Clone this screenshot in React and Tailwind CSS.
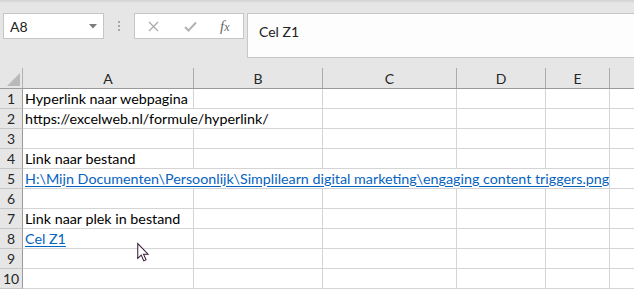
import React from 'react';

const cols = [
  { id: 'A', w: 171 },
  { id: 'B', w: 129 },
  { id: 'C', w: 134 },
  { id: 'D', w: 89 },
  { id: 'E', w: 64 },
  { id: '', w: 40 },
];

// span = number of columns the overflowing text covers
const rows = [
  { n: 1, text: 'Hyperlink naar webpagina', span: 1 },
  { n: 2, text: 'https://excelweb.nl/formule/hyperlink/', span: 2 },
  { n: 3 },
  { n: 4, text: 'Link naar bestand', span: 1 },
  { n: 5, text: 'H:\\Mijn Documenten\\Persoonlijk\\Simplilearn digital marketing\\engaging content triggers.png', span: 5, link: true },
  { n: 6 },
  { n: 7, text: 'Link naar plek in bestand', span: 1 },
  { n: 8, text: 'Cel Z1', span: 1, link: true },
  { n: 9 },
  { n: 10 },
];

const font = { fontFamily: 'Lato, "Open Sans", sans-serif' };

const Cursor = () => (
  <svg className="absolute left-[136px] top-[242px]" width="14" height="21" viewBox="0 0 13 20">
    <path
      d="M1.5 1.5 L1.5 15.5 L4.8 12.4 L7.3 18 L9.4 17 L7 11.6 L11.3 11.6 Z"
      fill="#fff"
      stroke="#3b1d3a"
      strokeWidth="1"
      strokeLinejoin="miter"
    />
  </svg>
);

const Row = ({ row }) => {
  const cells = [];
  let i = 0;
  while (i < cols.length) {
    const span = i === 0 && row.text ? row.span : 1;
    const w = cols.slice(i, i + span).reduce((s, c) => s + c.w, 0);
    cells.push(
      <div
        key={i}
        style={{ width: w }}
        className="h-full shrink-0 border-r border-b border-[#d4d4d4] bg-white flex items-center pl-[2px] overflow-hidden whitespace-nowrap"
      >
        {i === 0 && row.text && (
          <span
            className={
              row.link
                ? 'text-[#0563c1] underline decoration-[#0563c1] underline-offset-2 text-[14.3px]'
                : 'text-black text-[14.3px]'
            }
          >
            {row.text}
          </span>
        )}
      </div>
    );
    i += span;
  }
  return (
    <div className="flex h-[20px]">
      <div className="w-[23px] shrink-0 h-full bg-[#e6e6e6] border-r border-b border-r-[#9b9b9b] border-b-[#c6c6c6] flex items-center justify-center text-[14px] text-[#262626]">
        {row.n}
      </div>
      {cells}
    </div>
  );
};

export default function App() {
  return (
    <div className="relative w-[634px] h-[289px] overflow-hidden bg-[#e6e6e6] select-none" style={font}>
      <div className="h-[3px] bg-gradient-to-b from-[#d2d2d2] to-[#e4e4e4]" />
      {/* formula bar */}
      <div className="flex pt-[10px] h-[55px]">
        <div className="ml-[3px] w-[101px] h-[26px] bg-white border border-[#c6c6c6] flex items-center justify-between pl-[6px] pr-[6px]">
          <span className="text-[14px] text-[#222]">A8</span>
          <svg width="8" height="5" viewBox="0 0 8 5">
            <path d="M0 0 H8 L4 4.5 Z" fill="#7a7a7a" />
          </svg>
        </div>
        <div className="w-[30px] flex flex-col items-center pt-[8px] gap-[2px]">
          <div className="w-[2px] h-[2px] bg-[#a8a8a8]" />
          <div className="w-[2px] h-[2px] bg-[#a8a8a8]" />
          <div className="w-[2px] h-[2px] bg-[#a8a8a8]" />
        </div>
        <div className="w-[110px] h-[26px] bg-white border border-[#c6c6c6] flex items-center">
          <svg className="ml-[13px]" width="11" height="11" viewBox="0 0 11 11">
            <path d="M1 1 L10 10 M10 1 L1 10" stroke="#a9a9a9" strokeWidth="1.2" />
          </svg>
          <svg className="ml-[25px]" width="13" height="11" viewBox="0 0 13 11">
            <path d="M1 6 L4.5 9.5 L12 1.5" stroke="#b3b3b3" strokeWidth="2" fill="none" />
          </svg>
          <span
            className="ml-[23px] text-[15px] italic text-[#6a6a6a] leading-none"
            style={{ fontFamily: '"Liberation Serif", serif' }}
          >
            f<span className="text-[12px]">x</span>
          </span>
        </div>
        <div className="ml-[3px] flex-1 h-[45px] bg-[#fdfdfd] border border-r-0 border-[#c6c6c6] pl-[11px] pt-[5px]">
          <span className="text-[14px] text-[#222]">Cel Z1</span>
        </div>
      </div>
      {/* column headers */}
      <div className="mt-[10px] flex h-[21px] border-b border-[#9b9b9b]">
        <div className="w-[23px] shrink-0 h-full border-r border-[#b0b0b0] relative">
          <svg className="absolute left-[7px] top-[5px]" width="13" height="13" viewBox="0 0 13 13">
            <path d="M13 0 V13 H0 Z" fill="#b9b9b9" />
          </svg>
        </div>
        {cols.map((c, i) => (
          <div
            key={i}
            style={{ width: c.w }}
            className="shrink-0 h-full border-r border-[#ababab] flex items-center justify-center text-[14px] text-[#262626]"
          >
            {c.id}
          </div>
        ))}
      </div>
      {rows.map((r) => (
        <Row key={r.n} row={r} />
      ))}
      <Cursor />
    </div>
  );
}
